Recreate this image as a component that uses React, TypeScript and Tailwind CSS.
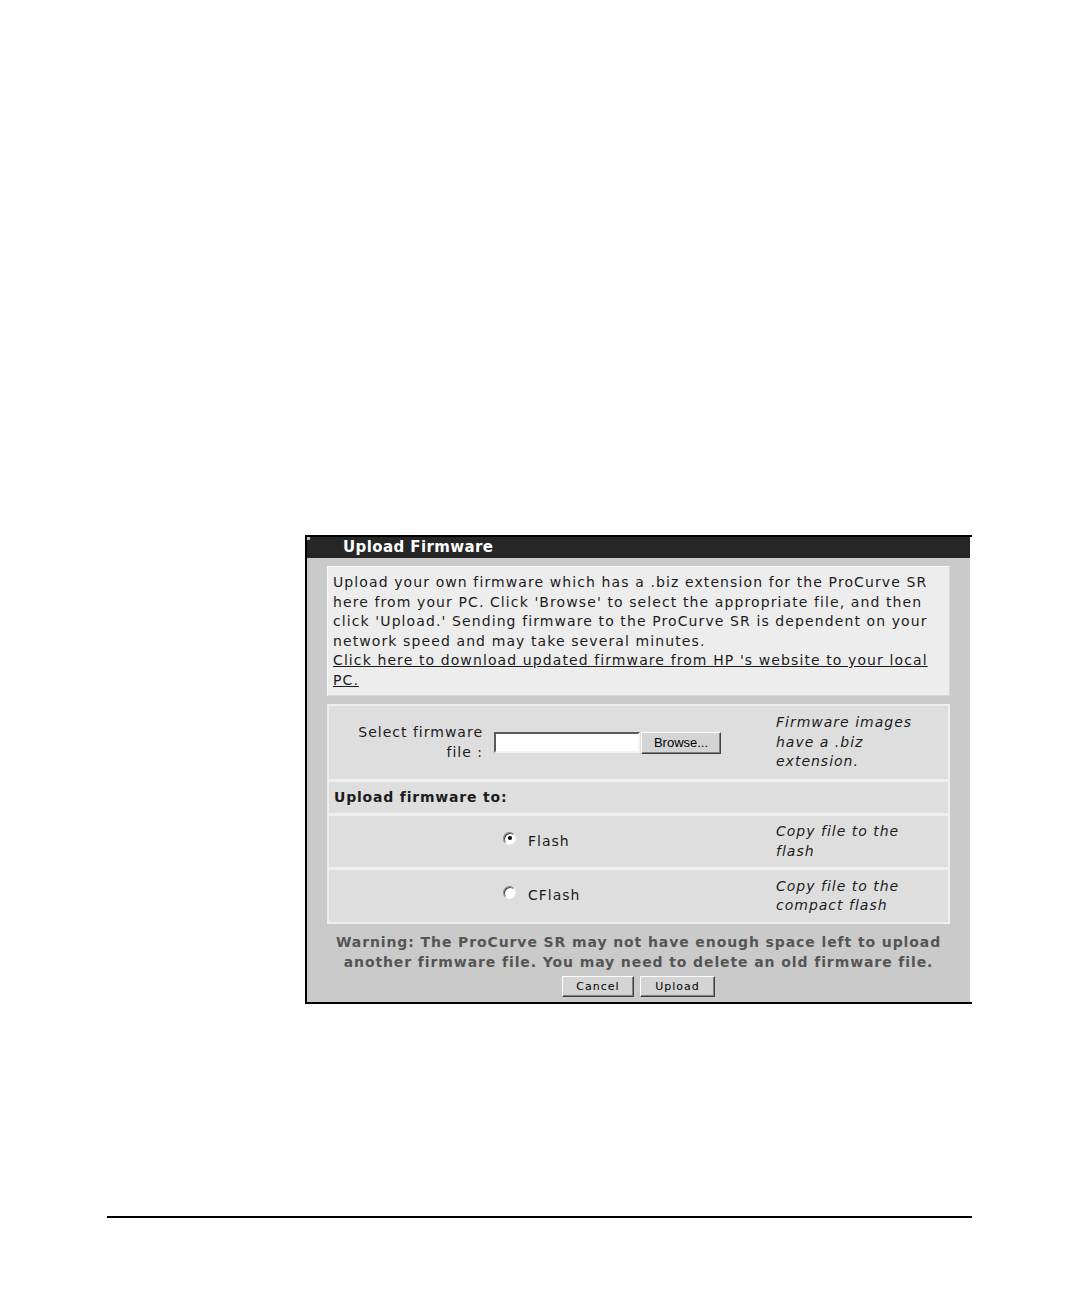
import React from 'react';

const font = { fontFamily: '"DejaVu Sans", Verdana, sans-serif' };

function Radio({ checked }: { checked?: boolean }) {
  return (
    <span className="relative -mt-[7px] mr-[12px] inline-flex h-[13px] w-[13px] items-center justify-center rounded-full border border-t-[#808080] border-l-[#808080] border-r-[#f4f4f4] border-b-[#f4f4f4] bg-white shadow-[inset_1px_1px_0_#404040]">
      {checked && <span className="h-[4px] w-[4px] rounded-full bg-black" />}
    </span>
  );
}

function Button({ label, w }: { label: string; w: string }) {
  return (
    <button
      className={`${w} h-[21px] border border-t-white border-l-white border-r-[#404040] border-b-[#404040] bg-[#d4d4d4] text-[11px] leading-none tracking-[1px] text-black shadow-[inset_-1px_-1px_0_#808080]`}
    >
      {label}
    </button>
  );
}

export default function App() {
  return (
    <div className="relative h-[1296px] w-[1080px] overflow-hidden bg-white text-[#1c1c1c]" style={font}>
      <div className="ml-[305px] mt-[535px] w-[667px]">
        <div className="border-t-2 border-black" />
        <div className="w-[665px] border-l-2 border-black bg-[#cacaca]">
          <div className="relative flex h-[21px] items-center bg-[#262626] pl-[36px] text-[15px] font-bold tracking-[0.4px] text-white">
            <span className="absolute left-0 top-0 h-[3px] w-[3px] bg-[#bdbdbd]" />
            Upload Firmware
          </div>

          <div className="px-[20px] pt-[8px]">
            <div className="whitespace-nowrap border border-t-[#f8f8f8] border-l-[#f8f8f8] border-r-[#d8d8d8] border-b-[#d8d8d8] bg-[#ededed] px-[5px] pb-[5px] pt-[6px] text-[14px] leading-[19.5px] tracking-[1.1px]">
              Upload your own firmware which has a .biz extension for the ProCurve SR
              <br />
              here from your PC. Click 'Browse' to select the appropriate file, and then
              <br />
              click 'Upload.' Sending firmware to the ProCurve SR is dependent on your
              <br />
              network speed and may take several minutes.
              <br />
              <span className="underline">Click here to download updated firmware from HP 's website to your local</span>
              <br />
              <span className="underline">PC.</span>
            </div>

            <div className="mt-[8px] flex flex-col gap-[3px] bg-[#efefef] p-[2px] text-[14px] leading-[19.5px] tracking-[1px]">
              <div className="grid h-[73px] grid-cols-[159px_283px_1fr] items-center bg-[#dedede]">
                <div className="pr-[5px] text-right">
                  Select firmware
                  <br />
                  file :
                </div>
                <div className="flex items-center pl-[6px]">
                  <div className="h-[21px] w-[146px] border-2 border-t-[#5a5a5a] border-l-[#5a5a5a] border-r-[#f4f4f4] border-b-[#f4f4f4] bg-white" />
                  <button
                    className="ml-[1px] h-[22px] w-[80px] border border-t-white border-l-white border-r-[#404040] border-b-[#404040] bg-[#d4d4d4] text-[13px] leading-none tracking-normal text-black shadow-[inset_-1px_-1px_0_#808080]"
                    style={{ fontFamily: '"Liberation Sans", Arial, sans-serif' }}
                  >
                    Browse...
                  </button>
                </div>
                <div className="whitespace-nowrap pl-[5px] italic">
                  Firmware images
                  <br />
                  have a .biz
                  <br />
                  extension.
                </div>
              </div>

              <div className="flex h-[31px] items-center bg-[#dedede] pl-[5px] font-bold tracking-[0.8px]">Upload firmware to:</div>

              <div className="grid h-[51px] grid-cols-[159px_283px_1fr] items-center bg-[#dedede]">
                <div />
                <div className="flex items-center pl-[15px]">
                  <Radio checked />
                  Flash
                </div>
                <div className="whitespace-nowrap pl-[5px] italic">
                  Copy file to the
                  <br />
                  flash
                </div>
              </div>

              <div className="grid h-[52px] grid-cols-[159px_283px_1fr] items-center bg-[#dedede]">
                <div />
                <div className="flex items-center pl-[15px]">
                  <Radio />
                  CFlash
                </div>
                <div className="whitespace-nowrap pl-[5px] italic">
                  Copy file to the
                  <br />
                  compact flash
                </div>
              </div>
            </div>
          </div>

          <div className="whitespace-nowrap pt-[9px] text-center text-[14px] font-bold leading-[19.5px] tracking-[0.9px] text-[#555555]">
            Warning: The ProCurve SR may not have enough space left to upload
            <br />
            another firmware file. You may need to delete an old firmware file.
          </div>
          <div className="flex justify-center gap-[6px] pb-[5px] pt-[4px]">
            <Button label="Cancel" w="w-[72px]" />
            <Button label="Upload" w="w-[75px]" />
          </div>
        </div>
        <div className="border-t-2 border-black" />
      </div>

      <div className="ml-[107px] mt-[212px] h-[2px] w-[865px] bg-black" />
    </div>
  );
}
